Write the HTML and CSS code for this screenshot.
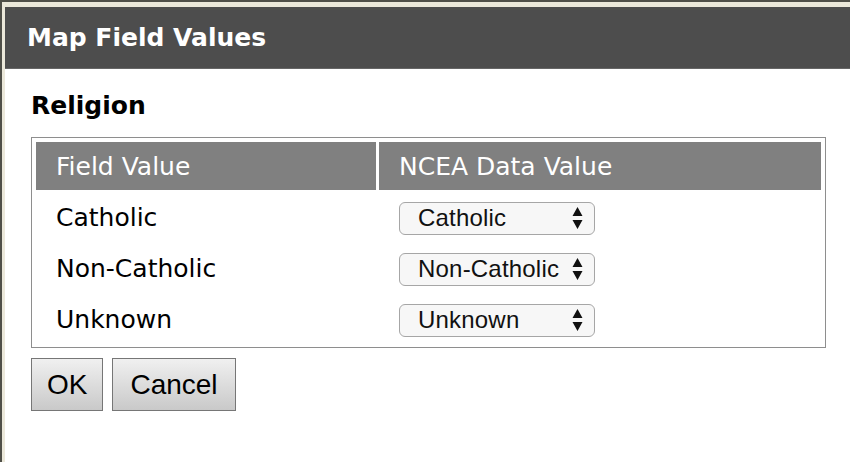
FILE: index.html
```html
<!DOCTYPE html>
<html>
<head>
<meta charset="utf-8">
<title>Map Field Values</title>
<link rel="stylesheet" href="styles.css">
</head>
<body>
<div class="dialog">
  <div class="titlebar">Map Field Values</div>
  <div class="content">
    <h2 class="section">Religion</h2>
    <table class="map">
      <thead>
        <tr><th class="c1">Field Value</th><th class="c2">NCEA Data Value</th></tr>
      </thead>
      <tbody>
        <tr>
          <td>Catholic</td>
          <td><div class="select"><span class="sel-text">Catholic</span>
            <svg class="arrows" width="11" height="22" viewBox="0 0 11 22"><path d="M5.5 0 L10.5 9 L0.5 9 Z M0.5 13 L10.5 13 L5.5 22 Z" fill="#111"/></svg></div></td>
        </tr>
        <tr>
          <td>Non-Catholic</td>
          <td><div class="select"><span class="sel-text">Non-Catholic</span>
            <svg class="arrows" width="11" height="22" viewBox="0 0 11 22"><path d="M5.5 0 L10.5 9 L0.5 9 Z M0.5 13 L10.5 13 L5.5 22 Z" fill="#111"/></svg></div></td>
        </tr>
        <tr>
          <td>Unknown</td>
          <td><div class="select"><span class="sel-text">Unknown</span>
            <svg class="arrows" width="11" height="22" viewBox="0 0 11 22"><path d="M5.5 0 L10.5 9 L0.5 9 Z M0.5 13 L10.5 13 L5.5 22 Z" fill="#111"/></svg></div></td>
        </tr>
      </tbody>
    </table>
    <div class="buttons">
      <button class="btn btn-ok">OK</button>
      <button class="btn btn-cancel">Cancel</button>
    </div>
  </div>
</div>
</body>
</html>
```

FILE: styles.css
```css
html, body {
  margin: 0;
  padding: 0;
}
body {
  width: 850px;
  height: 462px;
  box-sizing: border-box;
  overflow: hidden;
  background: #ebe8da;
  border-top: 2px solid #4f4f48;
  border-left: 2px solid #4f4f48;
  padding: 5px 0 0 3px;
  font-family: "DejaVu Sans", Verdana, sans-serif;
}
.dialog {
  background: #ffffff;
  height: 100%;
}
.titlebar {
  height: 62px;
  box-sizing: border-box;
  background: #4d4d4d;
  border-bottom: 1px solid #666;
  color: #ffffff;
  font-weight: bold;
  font-size: 25px;
  line-height: 61px;
  padding-left: 22px;
}
.content {
  padding: 0 0 0 26px;
}
.section {
  margin: 0;
  padding-top: 22px;
  font-size: 25px;
  line-height: 30px;
  font-weight: bold;
  color: #000;
  height: 68px;
  box-sizing: border-box;
}
.map {
  border: 1px solid #8e8e8e;
  border-collapse: separate;
  border-spacing: 3px;
  padding: 1px;
  width: 795px;
  margin-top: 0;
}
.map th {
  background: #808080;
  color: #ffffff;
  font-weight: normal;
  font-size: 25px;
  text-align: left;
  height: 48px;
  padding: 0 0 0 20px;
  box-sizing: border-box;
}
.map th.c1 {
  width: 340px;
}
.map td {
  height: 48px;
  padding: 0 0 0 20px;
  font-size: 25px;
  color: #000;
  vertical-align: middle;
}
.select {
  width: 196px;
  height: 33px;
  box-sizing: border-box;
  border: 1px solid #a6a6a6;
  border-radius: 6px;
  background: #f7f7f7;
  display: flex;
  align-items: center;
  justify-content: space-between;
  padding: 0 11px 0 18px;
  margin-top: 2px;
}
.sel-text {
  font-family: "Liberation Sans", Arial, sans-serif;
  font-size: 24px;
  letter-spacing: 0.2px;
  color: #111;
  white-space: nowrap;
}
.arrows {
  flex: none;
}
.buttons {
  display: flex;
  gap: 9px;
  margin-top: 10px;
  margin-left: 0;
}
.btn {
  height: 53px;
  box-sizing: border-box;
  border: 1px solid #767676;
  border-radius: 0;
  background: linear-gradient(#f0f0f0, #c9c9c9);
  font-family: "Liberation Sans", Arial, sans-serif;
  font-size: 28px;
  color: #000;
  padding: 0 15px;
  margin: 0;
}
.btn-ok {
  width: 72px;
}
.btn-cancel {
  width: 124px;
}
```
